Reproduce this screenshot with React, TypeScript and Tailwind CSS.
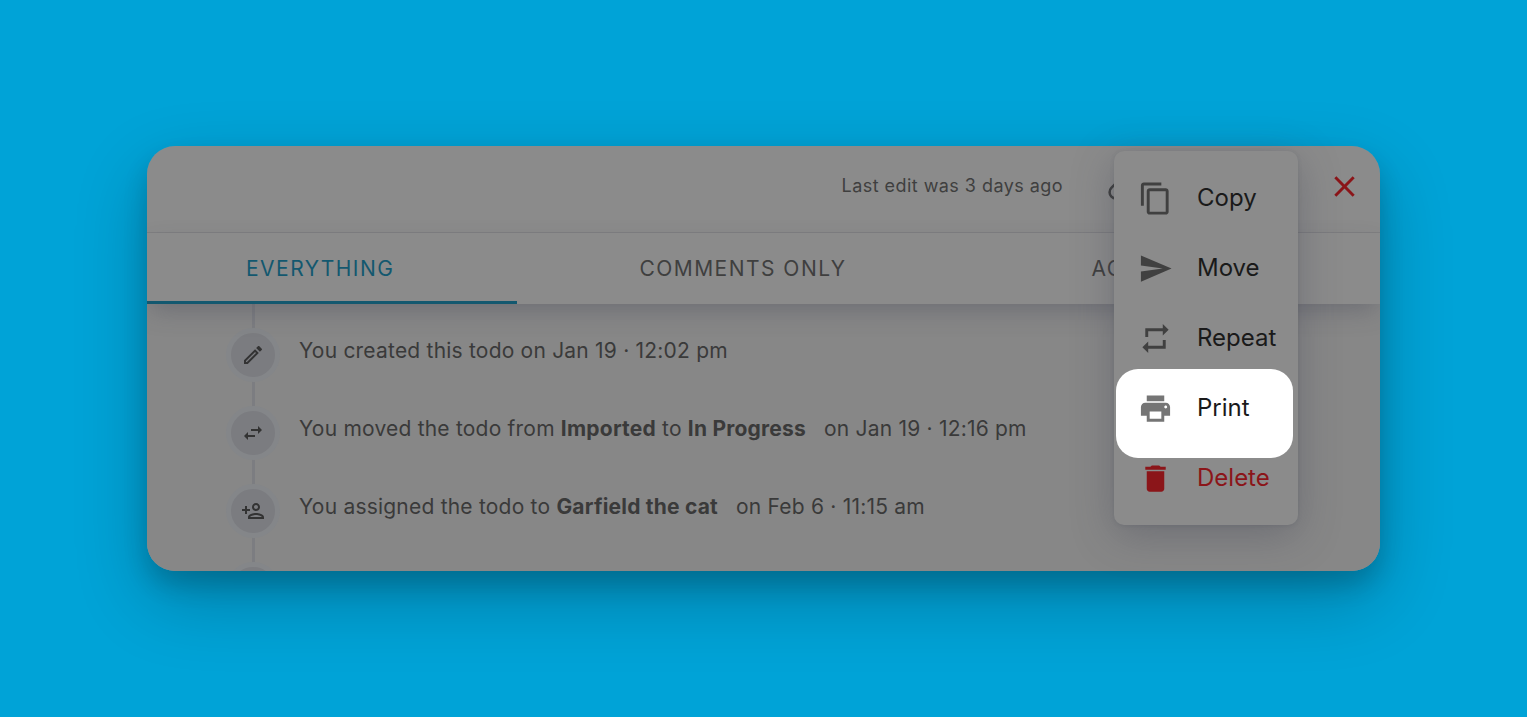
import type { ReactNode } from 'react';
import type { IconType } from 'react-icons';
import {
  MdClose,
  MdContentCopy,
  MdDelete,
  MdOutlineCheck,
  MdOutlineEdit,
  MdOutlinePersonAdd,
  MdPrint,
  MdRepeat,
  MdSend,
  MdSwapHoriz,
} from 'react-icons/md';
import { Link } from 'lucide-react';
import { clsx } from 'clsx';

const tabs = ['Everything', 'Comments only', 'Activity'];

type Activity = { id: string; icon: IconType; body: ReactNode };

const activities: Activity[] = [
  {
    id: 'created',
    icon: MdOutlineEdit,
    body: 'You created this todo on Jan 19 · 12:02 pm',
  },
  {
    id: 'moved',
    icon: MdSwapHoriz,
    body: (
      <>
        You moved the todo from <b>Imported</b> to <b>In Progress</b>
        <span className="ml-[18px]">on Jan 19 · 12:16 pm</span>
      </>
    ),
  },
  {
    id: 'assigned',
    icon: MdOutlinePersonAdd,
    body: (
      <>
        You assigned the todo to <b>Garfield the cat</b>
        <span className="ml-[18px]">on Feb 6 · 11:15 am</span>
      </>
    ),
  },
  { id: 'done', icon: MdOutlineCheck, body: null },
];

const actions: { label: string; icon: IconType }[] = [
  { label: 'Copy', icon: MdContentCopy },
  { label: 'Move', icon: MdSend },
  { label: 'Repeat', icon: MdRepeat },
  { label: 'Print', icon: MdPrint },
  { label: 'Delete', icon: MdDelete },
];

function TodoHeader() {
  return (
    <header className="flex h-[87px] items-center justify-end border-b border-[#7e7e80] pb-1.5 pr-[18px]">
      <p className="mr-11 text-lg tracking-wide text-[#3f3f3f]">Last edit was 3 days ago</p>
      <button type="button" aria-label="Copy link" className="mr-[190px] text-[#3f3f3f]">
        <Link className="size-[30px]" />
      </button>
      <button type="button" aria-label="Close" className="text-[#8b1519]">
        <MdClose className="size-[35px]" />
      </button>
    </header>
  );
}

function Tabs() {
  return (
    <nav className="relative flex h-[71px] bg-[#8b8b8b] shadow-[0_10px_24px_-4px_rgba(60,64,80,0.35)]">
      {tabs.map((tab, i) => (
        <button
          key={tab}
          type="button"
          className={clsx(
            'border-b-[3px] pr-[123px] pt-1 text-[21px] uppercase tracking-[0.07em]',
            i === 0
              ? 'border-[#13586f] pl-[99px] text-[#13586f]'
              : 'border-transparent pl-[122px] text-[#3f3f3f]',
          )}
        >
          {tab}
        </button>
      ))}
    </nav>
  );
}

function Timeline() {
  return (
    <ol className="h-[267px] overflow-hidden bg-[#878787] pl-[79px]">
      {activities.map(({ id, icon: Icon, body }) => (
        <li key={id} className="flex gap-[19px]">
          <div className="flex w-[54px] flex-col items-center">
            <span className="h-6 w-[3px] bg-[#7c7d81]" />
            <span className="flex size-[54px] items-center justify-center rounded-full border-[5px] border-[#848689] bg-[#7b7c80] text-[#333]">
              <Icon className="size-6" />
            </span>
          </div>
          <p className="mt-8 text-[21px] leading-[30px] tracking-[0.01em] text-[#3a3a3a]">{body}</p>
        </li>
      ))}
    </ol>
  );
}

function ActionsMenu() {
  return (
    <ul className="absolute right-[82px] top-[5px] w-[184px] rounded-[10px] bg-[#8b8b8b] py-3 shadow-[0_1px_4px_rgba(60,64,80,0.15),0_10px_40px_rgba(60,64,80,0.35)]">
      {actions.map(({ label, icon: Icon }) => (
        <li key={label} className="relative">
          {/* Spotlight behind the highlighted action */}
          {label === 'Print' && (
            <span className="absolute -bottom-[15px] -top-1 left-0.5 right-[5px] rounded-[22px] bg-white" />
          )}
          <button
            type="button"
            className={clsx(
              'relative flex h-[70px] w-full items-center gap-6 pl-6 text-2xl',
              label === 'Delete' ? 'text-[#8b1519]' : 'text-[#1a1a1a]',
            )}
          >
            <Icon
              className={clsx(
                'size-[35px] shrink-0',
                label === 'Print' && 'text-[#757575]',
                label !== 'Print' && label !== 'Delete' && 'text-[#404040]',
              )}
            />
            {label}
          </button>
        </li>
      ))}
    </ul>
  );
}

export default function App() {
  return (
    <main className="flex min-h-screen items-center bg-[#00a3d7] px-[147px] font-['Inter',sans-serif]">
      <section className="relative w-full rounded-[28px] shadow-[0_14px_24px_rgba(0,0,0,0.16),0_28px_72px_rgba(0,0,0,0.24)]">
        <div className="overflow-hidden rounded-[28px] bg-[#8b8b8b]">
          <TodoHeader />
          <Tabs />
          <Timeline />
        </div>
        <ActionsMenu />
      </section>
    </main>
  );
}
